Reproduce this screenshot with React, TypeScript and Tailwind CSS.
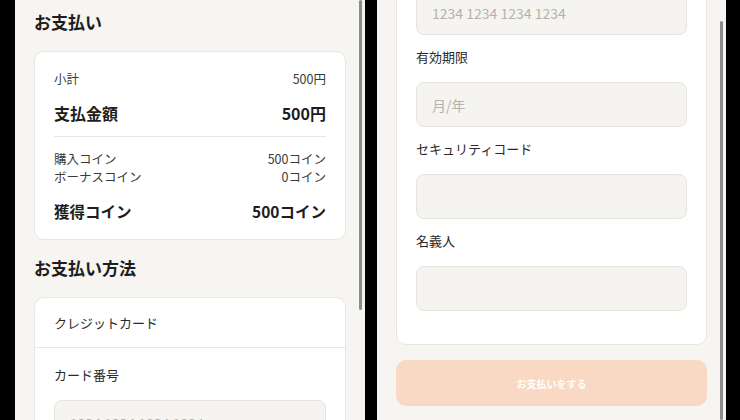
import React from "react";

const font = "font-['Noto_Sans_CJK_JP','Noto_Sans',sans-serif]";

function Field({ label, placeholder }: { label: string; placeholder?: string }) {
  return (
    <div>
      <div className="text-[13px] leading-5 text-[#2a2a2a]">{label}</div>
      <input
        readOnly
        placeholder={placeholder}
        className="mt-[15px] block h-[45px] w-full rounded-[8px] border border-[#e6e4df] bg-[#f5f4f1] pl-[15px] text-[14px] outline-none placeholder:text-[#b4b2ad]"
      />
    </div>
  );
}

function PaymentPage() {
  return (
    <div className="px-[19px] pt-[10px] text-[#1d1d1d]">
      <h2 className="text-[17px] font-bold leading-6">お支払い</h2>

      <div className="mt-[17px] rounded-[10px] border border-[#e9e7e2] bg-white px-[19px] pt-[18px] pb-[16px]">
        <div className="flex justify-between text-[12.5px] leading-[18px] text-[#3a3a3a]">
          <span>小計</span>
          <span>500円</span>
        </div>
        <div className="mt-[13px] flex justify-between text-[16px] font-bold leading-6">
          <span>支払金額</span>
          <span>500円</span>
        </div>
        <div className="mt-[11px] border-t border-[#e9e7e2]" />
        <div className="mt-[13px] text-[12.5px] leading-[18px] text-[#3a3a3a]">
          <div className="flex justify-between">
            <span>購入コイン</span>
            <span>500コイン</span>
          </div>
          <div className="flex justify-between">
            <span>ボーナスコイン</span>
            <span>0コイン</span>
          </div>
        </div>
        <div className="mt-[13px] flex justify-between text-[15.5px] font-bold leading-6">
          <span>獲得コイン</span>
          <span>500コイン</span>
        </div>
      </div>

      <h2 className="mt-[16px] text-[17px] font-bold leading-6">お支払い方法</h2>

      <div className="mt-[17px] rounded-[10px] border border-[#e9e7e2] bg-white">
        <div className="flex h-[50px] items-center border-b border-[#e9e7e2] px-[19px] text-[13px] text-[#2a2a2a]">
          クレジットカード
        </div>
        <div className="flex flex-col gap-[12px] px-[19px] pt-[17px] pb-[33px]">
          <Field label="カード番号" placeholder="1234 1234 1234 1234" />
          <Field label="有効期限" placeholder="月/年" />
          <Field label="セキュリティコード" />
          <Field label="名義人" />
        </div>
      </div>

      <button className="mt-[15px] h-[46px] w-full rounded-[10px] bg-[#f9d8c4] text-[10px] font-bold text-white">
        お支払いをする
      </button>
    </div>
  );
}

export default function App() {
  return (
    <div className={`flex h-[420px] w-[740px] gap-[12px] overflow-hidden bg-black pl-[15px] ${font}`}>
      <div className="relative h-[420px] w-[350px] shrink-0 overflow-hidden bg-[#f6f5f2]">
        <PaymentPage />
        <div className="absolute top-0 right-[3px] h-[310px] w-[3px] rounded-full bg-[#8c8c8c]" />
      </div>
      <div className="relative h-[420px] w-[349px] shrink-0 overflow-hidden bg-[#f6f5f2]">
        <div className="-mt-[410px]">
          <PaymentPage />
        </div>
        <div className="absolute top-[21px] right-[3px] bottom-0 w-[3px] rounded-full bg-[#8c8c8c]" />
      </div>
    </div>
  );
}
